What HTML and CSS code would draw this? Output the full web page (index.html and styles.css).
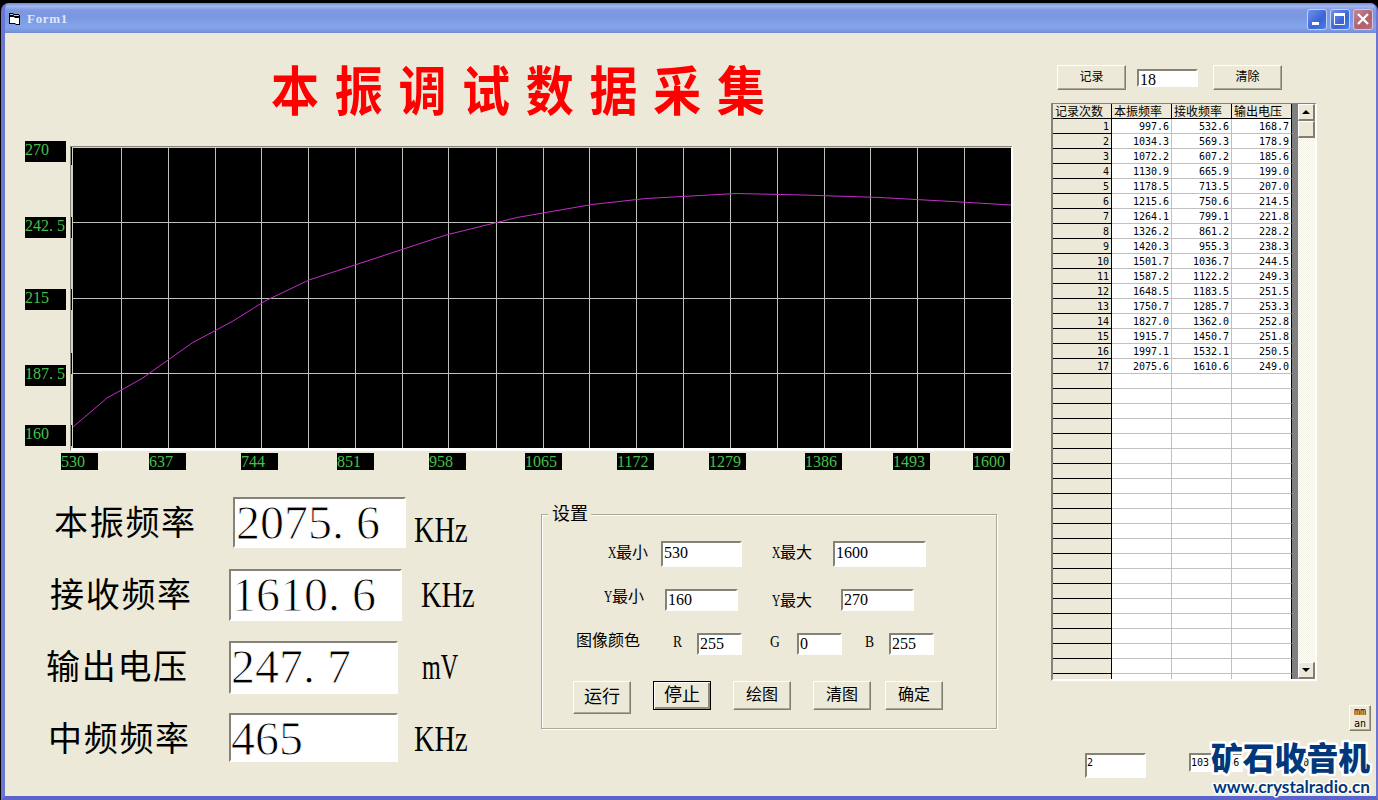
FILE: index.html
```html
<!DOCTYPE html>
<html lang="zh-CN">
<head>
<meta charset="utf-8">
<title>Form1</title>
<link rel="stylesheet" href="styles.css">
</head>
<body>
<div class="window">
  <header class="titlebar">
    <svg class="app-icon" width="12" height="12" viewBox="0 0 12 12">
      <path d="M0 0h4l1 1h5v1h1v10H7l-1-1H0z" fill="#000"/>
      <path d="M1 4h4l1 1h4v6H7l-1-1H1z" fill="#fff"/>
      <path d="M1 1.500h3l1 1h5" stroke="#9fd8d8" fill="none"/>
    </svg>
    <span class="caption">Form1</span>
    <div class="controls">
      <span class="ctl"><svg width="20" height="20"><rect x="5" y="13" width="7" height="3" fill="#fff"/></svg></span>
      <span class="ctl"><svg width="20" height="20"><path d="M4.500 5v10.500h10V5" stroke="#fff" fill="none"/><rect x="4" y="4" width="11" height="3" fill="#fff"/></svg></span>
      <span class="ctl close"><svg width="20" height="20"><path d="M5 5l10 10M15 5L5 15" stroke="#fff" stroke-width="2.300"/></svg></span>
    </div>
  </header>
  <main class="form">
    <section class="left">
      <h1>本振调试数据采集</h1>
      <div class="chart">
        <div class="y-axis">
          <span class="tick">270</span>
          <span class="tick">242<i>.</i>5</span>
          <span class="tick">215</span>
          <span class="tick">187<i>.</i>5</span>
          <span class="tick">160</span>
        </div>
        <svg class="plot" width="945" height="307" viewBox="69 145 945 307">
          <rect x="70" y="146" width="943" height="305" fill="#fff"/>
          <path d="M70 451V146h942v1H71v303z" fill="#86847a"/>
          <rect x="71" y="147" width="940" height="303" fill="#d4d1c5"/>
          <path d="M71.500 147v18M71.500 217v21M71.500 289v21M71.500 353v21M71.500 425v21" stroke="#000"/>
          <rect x="73" y="148" width="938" height="300" fill="#000"/>
          <path stroke="#bdbfbb" fill="none" d="M121.500 148v300M168.500 148v300M215.500 148v300M261.500 148v300M308.500 148v300M355.500 148v300M402.500 148v300M448.500 148v300M496.500 148v300M543.500 148v300M589.500 148v300M636.500 148v300M683.500 148v300M730.500 148v300M777.500 148v300M824.500 148v300M870.500 148v300M917.500 148v300M964.500 148v300M73 222.500h938M73 298.500h938M73 373.500h938"/>
          <rect x="71" y="448" width="941" height="3" fill="#fff"/>
          <polyline fill="none" stroke="#c22fc8" points="73,427 107,398 142,378.500 192,343 233,321 265,301 309,280 364,262 446,235 517,217.500 592,204.500 646,198.500 736,193.500 803,195 880,197.500 952,201.500 1011,205"/>
        </svg>
      </div>
      <div class="x-axis">
        <span class="tick">530</span><span class="tick">637</span><span class="tick">744</span><span class="tick">851</span><span class="tick">958</span><span class="tick">1065</span><span class="tick">1172</span><span class="tick">1279</span><span class="tick">1386</span><span class="tick">1493</span><span class="tick">1600</span>
      </div>
      <div class="lower">
        <div class="readings">
          <div class="reading local"><span class="name">本振频率</span><span class="field big">2075<i>.</i>6</span><span class="unit"><b>KHz</b></span></div>
          <div class="reading receive"><span class="name">接收频率</span><span class="field big">1610<i>.</i>6</span><span class="unit"><b>KHz</b></span></div>
          <div class="reading volt"><span class="name">输出电压</span><span class="field big">247<i>.</i>7</span><span class="unit mv"><b>mV</b></span></div>
          <div class="reading mid"><span class="name">中频频率</span><span class="field big">465</span><span class="unit"><b>KHz</b></span></div>
        </div>
        <div class="settings">
          <span class="legend">设置</span>
          <div class="set-row x-range">
            <label><u>X</u>最小</label><span class="field">530</span>
            <label><u>X</u>最大</label><span class="field">1600</span>
          </div>
          <div class="set-row y-range">
            <label><u>Y</u>最小</label><span class="field">160</span>
            <label><u>Y</u>最大</label><span class="field">270</span>
          </div>
          <div class="set-row colors">
            <label>图像颜色</label>
            <label class="ch"><u>R</u></label><span class="field">255</span>
            <label class="ch"><u>G</u></label><span class="field">0</span>
            <label class="ch"><u>B</u></label><span class="field">255</span>
          </div>
          <div class="set-row actions">
            <span class="btn run">运行</span>
            <span class="btn stop">停止</span>
            <span class="btn">绘图</span>
            <span class="btn">清图</span>
            <span class="btn">确定</span>
          </div>
        </div>
      </div>
    </section>
    <aside class="right">
      <div class="record-bar">
        <span class="btn small">记录</span>
        <span class="field">18</span>
        <span class="btn small">清除</span>
      </div>
      <div class="grid">
        <div class="cells" id="cells">
          <span class="head">记录次数</span><span class="head">本振频率</span><span class="head">接收频率</span><span class="head">输出电压</span>
        </div>
        <div class="scrollbar">
          <span class="arrow"><svg width="14" height="14"><path d="M3 9h8L7 5z" fill="#000"/></svg></span>
          <span class="thumb"></span>
          <span class="arrow down"><svg width="14" height="14"><path d="M3 5h8L7 9z" fill="#000"/></svg></span>
        </div>
      </div>
      <span class="btn mini">mm<br>an</span>
      <div class="footer-fields">
        <span class="field">2</span>
        <span class="field">1037.566</span>
        <span class="field">005</span>
      </div>
    </aside>
  </main>
</div>
<svg class="watermark" width="171" height="62" viewBox="0 0 171 62">
  <g stroke="#fff" stroke-linejoin="round" paint-order="stroke" fill="#00387a">
    <text class="wm-name" x="4" y="32" textLength="159" lengthAdjust="spacingAndGlyphs">矿石收音机</text>
    <text class="wm-url" x="6" y="55" textLength="157" lengthAdjust="spacingAndGlyphs">www.crystalradio.cn</text>
  </g>
</svg>
<script src="grid.js"></script>
</body>
</html>
```
FILE: styles.css
```css
* { box-sizing: border-box; }
body {
  margin: 0;
  width: 1378px;
  height: 800px;
  overflow: hidden;
  background: #000;
  padding: 3px 0 0 1px;
  font-family: "Liberation Serif", "Noto Sans CJK SC", serif;
  color: #000;
}
i, u, b { font-style: normal; font-weight: normal; text-decoration: none; }
i { display: inline-block; width: .5em; }
.window {
  height: 797px;
  display: flex;
  flex-direction: column;
  border: solid #6b75d2;
  border-width: 0 2px 4px 4px;
  border-bottom-color: #5c64cc;
  border-radius: 8px 8px 0 0;
  background: #7b97e0;
  overflow: hidden;
}
.titlebar {
  height: 30px;
  flex: none;
  display: flex;
  align-items: center;
  padding: 2px 3px 0;
  background: linear-gradient(#6c86d8, #a4b9ee 3px, #8099e0 7px, #7b97e0 14px, #82a4ec 24px, #7c97dc 28px, #7288cf);
}
.app-icon { margin: 0 6px 0 1px; }
.caption {
  color: #dbe8fb;
  font: bold 13px "Liberation Serif", serif;
  letter-spacing: .7px;
}
.controls { margin-left: auto; display: flex; gap: 3px; }
.ctl {
  width: 20px;
  height: 21px;
  border: 1px solid #c3d1f5;
  border-radius: 3px;
  background: linear-gradient(135deg, #6d92ec, #3a63d6 60%, #4a80e8);
}
.ctl svg { display: block; margin: -1px; }
.close { background: linear-gradient(135deg, #c08798, #b0606e 60%, #b86f74); border-color: #d9c3db; }
.form { flex: 1; display: flex; background: #ece9d8; }
.left { width: 1046px; }
h1 {
  margin: 0 0 0 266px;
  font: bold 48px/108px "Noto Sans CJK SC", sans-serif;
  letter-spacing: 15.700px;
  color: #f00;
  white-space: nowrap;
  transform: scaleY(1.12);
}
.chart { display: flex; height: 312px; padding-left: 20px; }
.y-axis { display: flex; flex-direction: column; width: 41px; }
.tick {
  background: #000;
  color: #45c04c;
  font-size: 16px;
  line-height: 18px;
  height: 21px;
  flex: none;
}
.y-axis .tick:nth-child(2) { margin-top: 55px; }
.y-axis .tick:nth-child(3) { margin-top: 51px; }
.y-axis .tick:nth-child(4) { margin-top: 55px; }
.y-axis .tick:nth-child(5) { margin-top: 39px; }
.plot { margin: 4px 0 0 3px; }
.x-axis { display: flex; padding-left: 56px; }
.x-axis .tick { width: 37px; height: 17px; margin-left: 55px; }
.x-axis .tick:nth-child(1) { margin-left: 0; }
.x-axis .tick:nth-child(2), .x-axis .tick:nth-child(10) { margin-left: 51px; }
.x-axis .tick:nth-child(4), .x-axis .tick:nth-child(6), .x-axis .tick:nth-child(9) { margin-left: 59px; }
.x-axis .tick:nth-child(11) { margin-left: 43px; }
.lower { display: flex; }
.readings { width: 536px; padding-top: 17px; }
.reading { display: flex; height: 72px; }
.name {
  font-size: 34px;
  letter-spacing: 1.700px;
  line-height: 74px;
  width: 179px;
  white-space: nowrap;
}
.field {
  background: #fff;
  border: 2px solid #fff;
  border-top-color: #85827a;
  border-left-color: #85827a;
  font-size: 16px;
  white-space: nowrap;
}
.big {
  font-size: 48px;
  line-height: 48px;
  height: 52px;
  margin-top: 10px;
  padding-left: 1px;
  -webkit-text-stroke: .9px #fff;
}
.unit { font-size: 36px; line-height: 72px; width: 60px; white-space: nowrap; }
.unit b { display: inline-block; transform: scaleX(.79); transform-origin: left; }
.mv b { transform: scaleX(.67); }
.local { padding-left: 49px; }
.local .big { width: 173px; height: 51px; }
.local .unit { margin: 7px 0 0 8px; }
.receive { padding-left: 45px; }
.receive .big { width: 173px; }
.receive .unit { margin-left: 19px; }
.volt { padding-left: 41px; }
.volt .name { width: 183px; }
.volt .big { width: 169px; height: 53px; padding-left: 0; }
.volt .unit { margin-left: 24px; }
.mid { padding-left: 43px; }
.mid .name { width: 181px; }
.mid .big { width: 169px; height: 49px; padding-left: 0; }
.mid .unit { margin-left: 16px; }
.settings {
  position: relative;
  width: 456px;
  height: 215px;
  margin-top: 44px;
  border: 1px solid #aca899;
  box-shadow: 1px 1px #fff, inset 1px 1px #fff;
}
.legend {
  position: absolute;
  left: 6px;
  top: -14px;
  padding: 0 3px 0 4px;
  background: #ece9d8;
  font-size: 18px;
  line-height: 27px;
}
.set-row { display: flex; align-items: flex-start; }
label { font-size: 16px; line-height: 24px; white-space: nowrap; flex: none; }
label u { display: inline-block; width: 8px; transform: scaleX(.72); transform-origin: left; }
.set-row .field { height: 22px; line-height: 18px; padding-left: 1px; flex: none; }
.x-range { padding: 26px 0 0 66px; height: 74px; }
.x-range .field { height: 26px; line-height: 20px; width: 81px; margin-left: 13px; }
.x-range label:nth-of-type(2) { margin-left: 30px; }
.x-range .field:nth-of-type(2) { width: 93px; margin-left: 21px; }
.y-range { padding-left: 62px; height: 44px; }
.y-range label { margin-top: -4px; }
.y-range .field { width: 73px; margin-left: 21px; }
.y-range label:nth-of-type(2) { margin: 0 0 0 34px; }
.y-range .field:nth-of-type(2) { margin-left: 29px; }
.colors { padding-left: 34px; height: 48px; }
.colors label { margin-top: -4px; }
.colors .ch { width: 24px; margin: -3px 0 0 28px; }
.colors .ch u { transform: scaleX(.85); }
.colors .field { width: 45px; }
.colors .ch:nth-of-type(2) { margin-left: 33px; }
.colors .ch:nth-of-type(3) { width: 27px; }
.colors .ch:nth-of-type(4) { margin-left: 23px; }
.btn {
  border: 2px solid #817d6f;
  border-top: 1px solid #fff;
  border-left: 1px solid #fff;
  border-right-width: 1px;
  border-bottom-width: 1px;
  box-shadow: inset -1px -1px #aca899;
  text-align: center;
  font-size: 16px;
  flex: none;
}
.actions { padding-left: 31px; }
.actions .btn { width: 58px; height: 29px; line-height: 26px; margin-right: 22px; }
.actions .btn:nth-child(4) { margin-right: 14px; }
.actions .run { height: 33px; line-height: 30px; font-size: 18px; }
.actions .stop { font-size: 18px; border: 1px solid #000; box-shadow: inset 1px 1px #fff, inset -2px -2px #8f8b7d; }
.right { flex: 1; display: flex; flex-direction: column; position: relative; }
.record-bar { display: flex; padding: 32px 0 0 6px; height: 70px; }
.small { width: 69px; height: 25px; font-size: 12px; line-height: 22px; }
.record-bar .field { width: 61px; height: 18px; margin: 4px 15px 0 11px; line-height: 18px; padding-left: 1px; }
.grid {
  display: flex;
  width: 266px;
  height: 578px;
  border: 2px solid #fff;
  border-top: 1px solid #85827a;
  border-left-color: #85827a;
  background: #808080;
}
.cells {
  display: grid;
  grid-template-columns: 59px repeat(3, 60px);
  grid-auto-rows: 15px;
  width: 239px;
  margin-right: 6px;
  overflow: hidden;
}
.cells span {
  border: 0 solid #c0c0c0;
  border-width: 0 1px 1px 0;
  background: #fff;
  font: 10px/15px "DejaVu Sans Mono", monospace;
  text-align: right;
  padding-right: 2px;
  white-space: nowrap;
}
.cells span:nth-child(4n) { border-right-color: #000; }
.cells span:nth-child(4n + 1) { background: #ece9d8; border-color: #000; }
.cells .head {
  background: #ece9d8;
  border-color: #000;
  font: 12px/14px "Noto Sans CJK SC", sans-serif;
  text-align: left;
  padding: 0 0 0 2px;
}
.scrollbar {
  width: 17px;
  display: flex;
  flex-direction: column;
  background: repeating-conic-gradient(#fff 0 25%, #f1efe6 0 50%) 0 0 / 2px 2px;
}
.arrow, .thumb {
  height: 17px;
  background: #ece9d8;
  border: 1px solid #fff;
  border-right: 2px solid #817d6f;
  border-bottom: 2px solid #817d6f;
}
.arrow svg { display: block; }
.down { margin-top: auto; }
.mini {
  width: 22px;
  height: 26px;
  margin: 24px 0 0 298px;
  font: 10px/12px "DejaVu Sans Mono", monospace;
}
.footer-fields { display: flex; padding: 22px 0 0 34px; }
.footer-fields .field {
  font: 10px/16px "DejaVu Sans Mono", monospace;
  width: 61px;
  height: 25px;
  flex: none;
}
.footer-fields .field:nth-child(2) { height: 19px; margin-left: 43px; width: 54px; }
.footer-fields .field:nth-child(3) { height: 19px; margin-left: 52px; width: 24px; border-color: #ece9d8; background: #ece9d8; }
.watermark { position: absolute; left: 1207px; top: 738px; }
.wm-name { font: 900 32px "Noto Sans CJK SC", sans-serif; stroke-width: 5px; }
.wm-url { font: bold 17px Lato, sans-serif; stroke-width: 3px; }
```
FILE: grid.js
```js
const rows = [
  [997.6, 532.6, 168.7], [1034.3, 569.3, 178.9], [1072.2, 607.2, 185.6],
  [1130.9, 665.9, 199.0], [1178.5, 713.5, 207.0], [1215.6, 750.6, 214.5],
  [1264.1, 799.1, 221.8], [1326.2, 861.2, 228.2], [1420.3, 955.3, 238.3],
  [1501.7, 1036.7, 244.5], [1587.2, 1122.2, 249.3], [1648.5, 1183.5, 251.5],
  [1750.7, 1285.7, 253.3], [1827.0, 1362.0, 252.8], [1915.7, 1450.7, 251.8],
  [1997.1, 1532.1, 250.5], [2075.6, 1610.6, 249.0]
];
const cells = document.getElementById("cells");
for (let r = 0; r < 38; r++) {
  const values = rows[r] ? [r + 1, ...rows[r].map(v => v.toFixed(1))] : ["", "", "", ""];
  for (const v of values) {
    const cell = document.createElement("span");
    cell.textContent = v;
    cells.append(cell);
  }
}
```
